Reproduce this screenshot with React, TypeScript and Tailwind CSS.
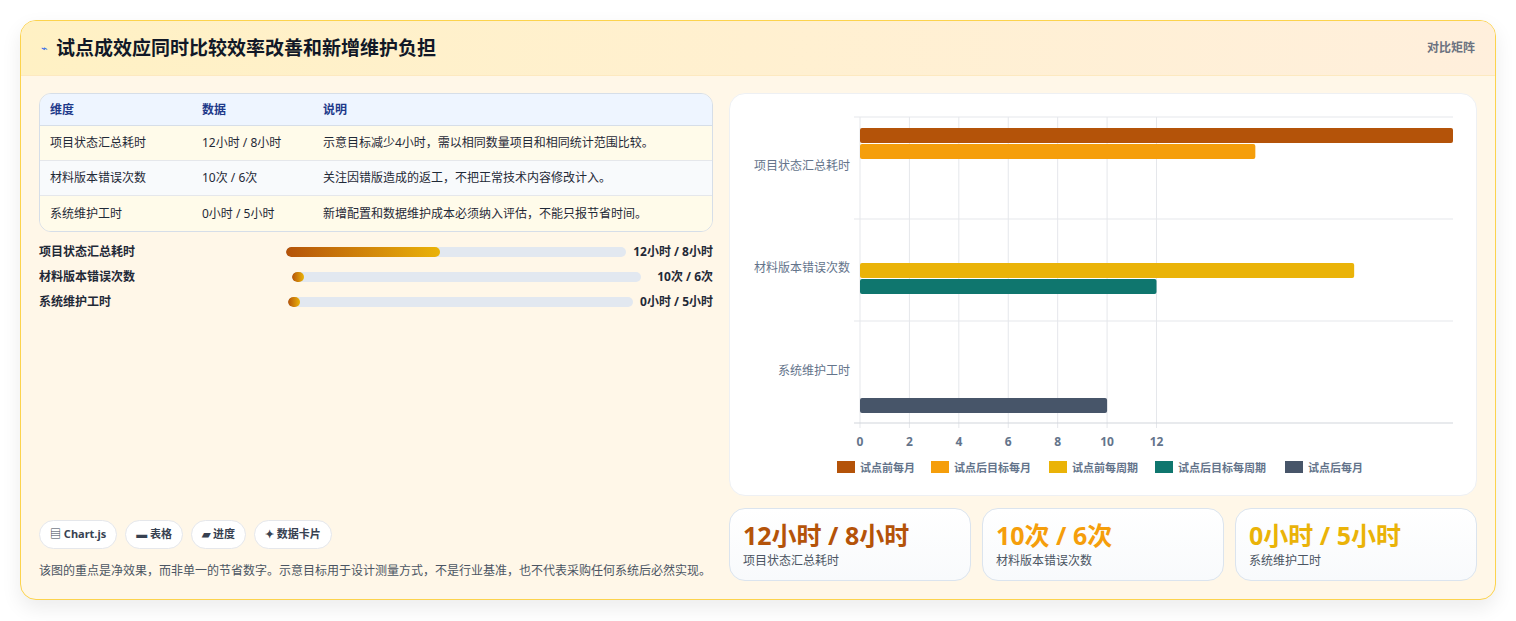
import React from "react";

const font = { fontFamily: '"Noto Sans", "Noto Sans CJK SC", sans-serif' };

function Chart() {
  const x0 = 130, x1 = 723, top = 23, bot = 329;
  const u = (x1 - x0) / 12;
  const bars = [
    { y: 34, v: 12, c: "#b45309" },
    { y: 50, v: 8, c: "#f59e0b" },
    { y: 169, v: 10, c: "#eab308" },
    { y: 185, v: 6, c: "#0f766e" },
    { y: 304, v: 5, c: "#475569" },
  ];
  const cats = [["项目状态汇总耗时", 76], ["材料版本错误次数", 178], ["系统维护工时", 281]] as const;
  const legend = [
    ["试点前每月", "#b45309", 107],
    ["试点后目标每月", "#f59e0b", 201],
    ["试点前每周期", "#eab308", 319],
    ["试点后目标每周期", "#0f766e", 425],
    ["试点后每月", "#475569", 555],
  ] as const;
  return (
    <svg width="746" height="402" viewBox="0 0 746 402" style={font}>
      {Array.from({ length: 7 }).map((_, i) => (
        <line key={i} x1={x0 + i * u} x2={x0 + i * u} y1={top} y2={bot + 5} stroke="#e5e7eb" />
      ))}
      {[top, 125, 227].map((y) => (
        <line key={y} x1={x0 - 6} x2={x1} y1={y} y2={y} stroke="#e5e7eb" />
      ))}
      <line x1={x0 - 6} x2={x1} y1={bot} y2={bot} stroke="#d1d5db" />
      {bars.map((b, i) => (
        <rect key={i} x={x0} y={b.y} width={b.v * u} height={15} rx={2} fill={b.c} />
      ))}
      {cats.map(([t, y]) => (
        <text key={t} x={120} y={y} textAnchor="end" fontSize="12" fill="#64748b">{t}</text>
      ))}
      {Array.from({ length: 7 }).map((_, i) => (
        <text key={i} x={x0 + i * u} y={352} textAnchor="middle" fontSize="12" fontWeight="700" fill="#64748b">{i * 2}</text>
      ))}
      {legend.map(([t, c, x]) => (
        <g key={t}>
          <rect x={x} y={367} width={18} height={12} fill={c} />
          <text x={x + 23} y={378} fontSize="11" fontWeight="700" fill="#64748b">{t}</text>
        </g>
      ))}
    </svg>
  );
}

const rows = [
  ["项目状态汇总耗时", "12小时 / 8小时", "示意目标减少4小时，需以相同数量项目和相同统计范围比较。", "bg-[#fffbea]"],
  ["材料版本错误次数", "10次 / 6次", "关注因错版造成的返工，不把正常技术内容修改计入。", "bg-[#f8fafc]"],
  ["系统维护工时", "0小时 / 5小时", "新增配置和数据维护成本必须纳入评估，不能只报节省时间。", "bg-[#fffbea]"],
];

export default function App() {
  return (
    <div className="w-[1516px] h-[621px] bg-white pt-[20px] pl-[20px]" style={font}>
      <div className="w-[1476px] h-[580px] rounded-2xl border border-[#fcd34d] bg-[#fff7e8] shadow-[0_8px_20px_rgba(0,0,0,0.08)] overflow-hidden flex flex-col">
        <div className="h-[55px] flex items-center justify-between px-5 bg-gradient-to-r from-[#fff1c4] to-[#ffefdc] border-b border-[#fde9c0]">
          <div className="flex items-center gap-2">
            <span className="text-[#2563eb] text-[11px]">⌁</span>
            <span className="text-[19px] font-bold text-[#111827]">试点成效应同时比较效率改善和新增维护负担</span>
          </div>
          <span className="text-[12px] font-bold text-[#6b7280]">对比矩阵</span>
        </div>
        <div className="flex-1 flex gap-4 px-[18px] pt-[17px] pb-[18px]">
          <div className="w-[676px] flex flex-col">
            <div className="rounded-xl border border-[#d6dee8] overflow-hidden text-[12px] text-[#1f2937]">
              <div className="h-[32px] flex items-center bg-[#eef5ff] font-bold text-[#1e3a8a] border-b border-[#d6dee8]">
                <div className="w-[162px] pl-[10px]">维度</div>
                <div className="w-[121px]">数据</div>
                <div>说明</div>
              </div>
              {rows.map((r, i) => (
                <div key={i} className={`h-[35px] flex items-center ${r[3]} ${i < 2 ? "border-b border-[#e5e7eb]" : ""}`}>
                  <div className="w-[162px] pl-[10px]">{r[0]}</div>
                  <div className="w-[121px]">{r[1]}</div>
                  <div>{r[2]}</div>
                </div>
              ))}
            </div>
            <div className="flex flex-col gap-[6px] mt-[10px] text-[12px] font-bold text-[#1f2937]">
              {[
                ["项目状态汇总耗时", "12小时 / 8小时", 266, 340, 154],
                ["材料版本错误次数", "10次 / 6次", 272, 349, 12],
                ["系统维护工时", "0小时 / 5小时", 268, 345, 12],
              ].map(([a, b, ml, w, f]) => (
                <div key={a as string} className="flex items-center h-[19px]">
                  <div className="w-[247px]">{a}</div>
                  <div className="h-[10px] rounded-full bg-[#e2e8f0] overflow-hidden" style={{ width: w as number, marginLeft: (ml as number) - 266 }}>
                    <div className="h-full rounded-full bg-gradient-to-r from-[#b45309] to-[#eab308]" style={{ width: f as number }} />
                  </div>
                  <div className="ml-auto">{b}</div>
                </div>
              ))}
            </div>
            <div className="mt-auto flex gap-2 text-[11px] font-bold text-[#374151]">
              {["▤ Chart.js", "▬ 表格", "▰ 进度", "✦ 数据卡片"].map((t) => (
                <span key={t} className="h-[29px] px-[10px] flex items-center rounded-full bg-white border border-[#e5e7eb]">{t}</span>
              ))}
            </div>
            <p className="mt-[12px] text-[12px] leading-[20px] text-[#4b5563]">
              该图的重点是净效果，而非单一的节省数字。示意目标用于设计测量方式，不是行业基准，也不代表采购任何系统后必然实现。
            </p>
          </div>
          <div className="flex-1 flex flex-col gap-[12px]">
            <div className="h-[403px] rounded-2xl bg-white border border-[#eef0f3]">
              <Chart />
            </div>
            <div className="flex gap-[11px]">
              {[
                ["12小时 / 8小时", "项目状态汇总耗时", "text-[#b45309]"],
                ["10次 / 6次", "材料版本错误次数", "text-[#f59e0b]"],
                ["0小时 / 5小时", "系统维护工时", "text-[#eab308]"],
              ].map(([v, l, c]) => (
                <div key={l} className="flex-1 h-[73px] rounded-2xl bg-gradient-to-b from-white to-[#f8fafc] border border-[#dbe4ee] px-[13px] pt-[9px]">
                  <div className={`text-[25px] font-bold leading-[34px] ${c}`}>{v}</div>
                  <div className="text-[12px] text-[#4b5563]">{l}</div>
                </div>
              ))}
            </div>
          </div>
        </div>
      </div>
    </div>
  );
}
